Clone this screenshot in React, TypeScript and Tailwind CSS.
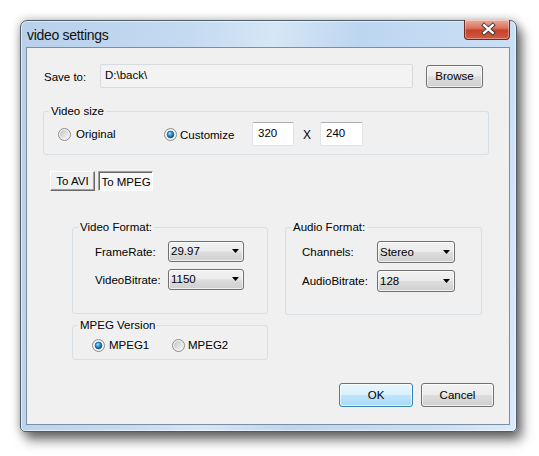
import type { ReactNode } from "react";

const face = "font-['Liberation_Sans',Arial,sans-serif]";

const btnNormal =
  "border-[#707070] bg-[linear-gradient(#f2f2f2_0%,#ebebeb_48%,#dddddd_52%,#cfcfcf_100%)]";
const btnDefault =
  "border-[#3c7fb1] bg-[linear-gradient(#eaf6fd_0%,#d9f0fc_48%,#bee6fd_52%,#a7d9f5_100%)]";

function WinButton({
  children,
  className = "",
  isDefault = false,
}: {
  children: ReactNode;
  className?: string;
  isDefault?: boolean;
}) {
  return (
    <div
      className={`flex items-center justify-center rounded-[3px] border shadow-[inset_0_0_0_1px_rgba(255,255,255,0.7)] ${
        isDefault ? btnDefault : btnNormal
      } ${className}`}
    >
      {children}
    </div>
  );
}

function Combo({ value, className = "" }: { value: string; className?: string }) {
  return (
    <div
      className={`flex items-center justify-between rounded-[3px] border pl-[2px] pr-[4px] pb-[1px] shadow-[inset_0_0_0_1px_rgba(255,255,255,0.7)] ${btnNormal} ${className}`}
    >
      <span>{value}</span>
      <svg width="7" height="4" viewBox="0 0 7 4">
        <path d="M0 0h7L3.5 4z" fill="#000" />
      </svg>
    </div>
  );
}

function Radio({ id, checked = false }: { id: string; checked?: boolean }) {
  return (
    <svg width="13" height="13" viewBox="0 0 13 13" className="shrink-0">
      <defs>
        <linearGradient id={`${id}-bg`} x1="0" y1="0" x2="1" y2="1">
          <stop offset="0" stopColor="#c4c4c4" />
          <stop offset="1" stopColor="#f8f8f8" />
        </linearGradient>
        <radialGradient id={`${id}-dot`} cx="0.4" cy="0.35" r="0.7">
          <stop offset="0" stopColor="#a6e3fb" />
          <stop offset="0.5" stopColor="#2a8ccd" />
          <stop offset="1" stopColor="#0c4680" />
        </radialGradient>
      </defs>
      <circle cx="6.5" cy="6.5" r="6" fill="#f4f4f4" stroke="#8c8c8c" />
      <circle cx="6.5" cy="6.5" r="4.6" fill={checked ? "#f2f2f2" : `url(#${id}-bg)`} />
      {checked && (
        <circle cx="6.5" cy="6.5" r="3.4" fill={`url(#${id}-dot)`} stroke="#1b4c78" strokeWidth="0.6" />
      )}
    </svg>
  );
}

function Group({
  title,
  className = "",
  children,
}: {
  title: string;
  className?: string;
  children: ReactNode;
}) {
  return (
    <fieldset className={`rounded-[3px] border border-[#d5dfe5] ${className}`}>
      <legend className="ml-[5px] px-[2px] leading-[14px]">{title}</legend>
      {children}
    </fieldset>
  );
}

function TextBox({ value, className = "" }: { value: string; className?: string }) {
  return (
    <div
      className={`flex h-[24px] items-center rounded-[2px] border border-[#e2e3ea] border-t-[#abadb3] bg-white pl-[5px] pb-[3px] ${className}`}
    >
      {value}
    </div>
  );
}

export default function App() {
  return (
    <div className={`min-h-[456px] w-[539px] overflow-hidden bg-white pt-[20px] text-[11.5px] leading-[14px] text-black ${face}`}>
      <div className="relative ml-[20px] flex h-[412px] w-[497px] flex-col rounded-t-[7px] rounded-b-[5px] border border-[#4f5c6b] bg-[linear-gradient(100deg,#b8d0ea_0%,#c4daf1_30%,#d6e6f6_45%,#bdd6f0_60%,#c8def4_85%,#dcebf9_100%)] pb-[6px] pl-[5px] pr-[6px] shadow-[5px_8px_12px_rgba(0,0,0,0.55),0_0_10px_rgba(0,0,0,0.3),inset_0_0_0_1px_rgba(255,255,255,0.55)]">
        {/* title bar */}
        <div className="flex h-[26px] items-center pl-[1px] pt-[2px] text-[14px] tracking-[-0.3px] text-[#111]">
          video settings
        </div>
        <div className="absolute right-[6px] top-[-1px] flex h-[20px] w-[46px] items-center justify-center rounded-b-[4px] border border-t-0 border-[#6b2a20] bg-[linear-gradient(#e9ab9c_0%,#d9735f_42%,#c5412a_55%,#d35a40_100%)] shadow-[inset_0_0_0_1px_rgba(255,255,255,0.35)]">
          <svg width="46" height="20" viewBox="0 0 46 20">
            <path d="M20 5l9 8M29 5l-9 8" stroke="#3a3a3a" strokeWidth="4.4" strokeLinecap="square" />
            <path d="M20 5l9 8M29 5l-9 8" stroke="#fff" strokeWidth="2.5" strokeLinecap="square" />
          </svg>
        </div>

        {/* client area */}
        <div className="flex flex-1 flex-col border border-[#7b8ea3] bg-[#f0f0f0]">
          <div className="mt-[16px] flex h-[24px] items-center pl-[17px]">
            <span className="w-[56px] pt-[2px]">Save to:</span>
            <div className="flex h-[24px] w-[313px] items-center rounded-[2px] border border-[#d9dadd] bg-[#f3f3f3] pb-[3px] pl-[4px]">
              {"D:\\back\\"}
            </div>
            <WinButton className="ml-[13px] h-[23px] w-[57px]">Browse</WinButton>
          </div>

          <Group title="Video size" className="ml-[16px] mt-[16px] w-[446px] pb-[8px] pt-[4px]">
            <div className="flex h-[24px] items-center pl-[14px]">
              <div className="flex w-[106px] items-center gap-[5px]">
                <Radio id="r-orig" />
                <span>Original</span>
              </div>
              <div className="flex w-[88px] items-center gap-[3px]">
                <Radio id="r-cust" checked />
                <span className="pt-[1px]">Customize</span>
              </div>
              <TextBox value="320" className="w-[42px]" />
              <span className="w-[26px] pt-[1px] text-center text-[12px]">X</span>
              <TextBox value="240" className="w-[43px]" />
            </div>
          </Group>

          <div className="ml-[23px] mt-[16px] flex gap-[3px]">
            <div className="flex h-[20px] w-[45px] items-center justify-center border border-b-[#696969] border-l-white border-r-[#696969] border-t-white bg-[#f0f0f0] shadow-[inset_-1px_-1px_0_#a0a0a0]">
              To AVI
            </div>
            <div className="flex h-[20px] w-[55px] items-center justify-center border border-b-white border-l-[#a0a0a0] border-r-white border-t-[#a0a0a0] bg-[#f8f8f8] pl-[1px] pt-[1px] shadow-[inset_1px_1px_0_#696969]">
              To MPEG
            </div>
          </div>

          <div className="ml-[45px] mt-[29px] flex gap-[17px]">
            <div className="flex w-[196px] flex-col">
              <Group title="Video Format:" className="h-[94px] pt-[7px]">
                <div className="flex flex-col gap-[7px] pl-[22px]">
                  <div className="flex items-center">
                    <span className="w-[73px]">FrameRate:</span>
                    <Combo value="29.97" className="h-[21px] w-[76px]" />
                  </div>
                  <div className="flex items-center">
                    <span className="w-[73px]">VideoBitrate:</span>
                    <Combo value="1150" className="h-[21px] w-[76px]" />
                  </div>
                </div>
              </Group>
              <Group title="MPEG Version" className="mt-[4px] h-[42px] pt-[6px]">
                <div className="flex items-center pl-[19px]">
                  <div className="flex w-[80px] items-center gap-[4px]">
                    <Radio id="r-m1" checked />
                    <span>MPEG1</span>
                  </div>
                  <div className="flex items-center gap-[3px]">
                    <Radio id="r-m2" />
                    <span>MPEG2</span>
                  </div>
                </div>
              </Group>
            </div>
            <Group title="Audio Format:" className="h-[95px] w-[197px] pt-[7px]">
              <div className="flex flex-col gap-[7px] pl-[16px]">
                <div className="flex items-center">
                  <span className="w-[75px]">Channels:</span>
                  <Combo value="Stereo" className="h-[22px] w-[78px]" />
                </div>
                <div className="flex items-center">
                  <span className="w-[75px]">AudioBitrate:</span>
                  <Combo value="128" className="h-[22px] w-[78px]" />
                </div>
              </div>
            </Group>
          </div>

          <div className="mt-[23px] flex justify-end gap-[8px] pr-[15px]">
            <WinButton isDefault className="h-[24px] w-[74px]">
              OK
            </WinButton>
            <WinButton className="h-[24px] w-[73px]">Cancel</WinButton>
          </div>
        </div>
      </div>
    </div>
  );
}
